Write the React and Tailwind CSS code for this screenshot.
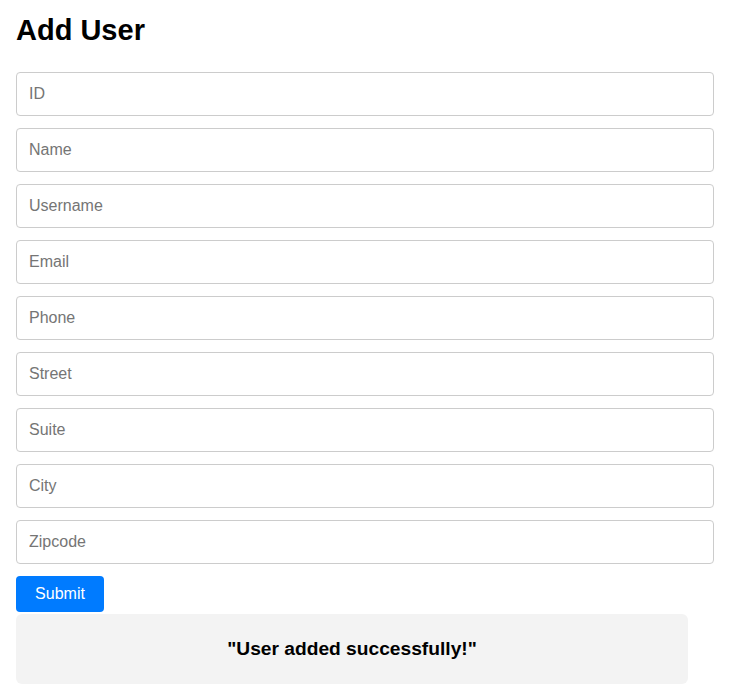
import { useState } from 'react'

const fields = ['ID', 'Name', 'Username', 'Email', 'Phone', 'Street', 'Suite', 'City', 'Zipcode']

export default function App() {
  const [values, setValues] = useState({})

  return (
    <div className="bg-white min-h-screen px-4 pt-[12px] font-['Liberation_Sans',Arial,sans-serif] text-black">
      <h1 className="text-[29px] leading-[36px] font-bold mb-[24px]">Add User</h1>
      <form className="flex flex-col gap-3" onSubmit={e => e.preventDefault()}>
        {fields.map(f => (
          <input
            key={f}
            placeholder={f}
            className="w-[698px] h-[44px] border border-[#cccccc] rounded-[4px] px-3 text-base placeholder:text-[#757575] focus:outline-none"
            value={values[f] || ''}
            onChange={e => setValues({ ...values, [f]: e.target.value })}
          />
        ))}
        <div>
          <button type="submit" className="w-[88px] h-[36px] bg-[#007bff] text-white text-base rounded-[4px]">
            Submit
          </button>
        </div>
      </form>
      <div className="mt-[2px] w-[672px] h-[70px] bg-[#f3f3f3] rounded-[6px] flex items-center justify-center">
        <p className="text-[19.2px] font-bold">"User added successfully!"</p>
      </div>
    </div>
  )
}
